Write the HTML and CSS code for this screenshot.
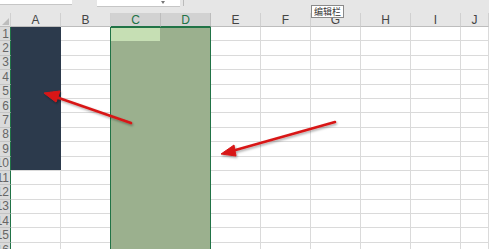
FILE: index.html
```html
<!DOCTYPE html>
<html lang="zh">
<head>
    <meta charset="UTF-8">
    <title>Sheet</title>
    <link rel="stylesheet" href="styles.css">
</head>
<body>
    <div class="topbar">
        <div class="name-box"></div>
        <div class="formula-box"><span class="drop"></span></div>
        <div class="sep"></div>
    </div>

    <div class="sheet" id="sheet">
        <div class="corner"><span class="corner-tri"></span></div>
    </div>

    <div class="tooltip">编辑栏</div>

    <svg class="arrows" width="489" height="249" viewBox="0 0 489 249">
        <defs>
            <filter id="shadow" x="-20%" y="-50%" width="140%" height="200%">
                <feDropShadow dx="1" dy="1.5" stdDeviation="1" flood-color="#000" flood-opacity="0.35"/>
            </filter>
        </defs>
        <g filter="url(#shadow)" fill="#d81818" stroke="#d81818">
            <line x1="131" y1="123" x2="56" y2="97" stroke-width="2.6" stroke-linecap="round"/>
            <polygon points="44,93 60,91 56,102" stroke-width="1"/>
            <line x1="335" y1="122" x2="232" y2="151" stroke-width="2.6" stroke-linecap="round"/>
            <polygon points="221,154 234,145 236,156" stroke-width="1"/>
        </g>
    </svg>

    <script>
        const cols = ['A', 'B', 'C', 'D', 'E', 'F', 'G', 'H', 'I', 'J'];
        const sheet = document.getElementById('sheet');

        // column headers
        cols.forEach(c => {
            const h = document.createElement('div');
            h.className = 'col-head' + (c === 'C' || c === 'D' ? ' picked' : '');
            h.textContent = c;
            sheet.appendChild(h);
        });

        // rows
        for (let r = 1; r <= 16; r++) {
            const rh = document.createElement('div');
            rh.className = 'row-head';
            rh.innerHTML = '<span>' + r + '</span>';
            sheet.appendChild(rh);
            cols.forEach(() => {
                const cell = document.createElement('div');
                cell.className = 'cell';
                sheet.appendChild(cell);
            });
        }

        // filled block A1:A10
        const dark = document.createElement('div');
        dark.className = 'dark-block';
        sheet.appendChild(dark);

        // selected columns C:D
        const sel = document.createElement('div');
        sel.className = 'selection';
        sel.innerHTML = '<div class="active-cell"></div>';
        sheet.appendChild(sel);
    </script>
</body>
</html>
```

FILE: styles.css
```css
body {
    margin: 0;
    width: 489px;
    height: 249px;
    overflow: hidden;
    background-color: #fff;
    font-family: "Liberation Sans", Arial, sans-serif;
    position: relative;
}
.topbar {
    height: 13px;
    background-color: #e6e6e6;
    display: flex;
    align-items: flex-start;
}
.name-box {
    width: 72px;
    height: 4px;
    background-color: #fff;
    border-bottom: 1px solid #c6c6c6;
}
.formula-box {
    width: 83px;
    height: 6px;
    margin-left: 25px;
    background-color: #fff;
    border-bottom: 1px solid #c6c6c6;
    position: relative;
}
.drop {
    position: absolute;
    right: 15px;
    top: 1px;
    border-left: 2px solid transparent;
    border-right: 2px solid transparent;
    border-top: 3px solid #777;
}
.sep {
    width: 1px;
    height: 6px;
    margin-left: 3px;
    background-color: #bbb;
}
.sheet {
    display: grid;
    grid-template-columns: 11px repeat(9, 50px) 28px;
    grid-template-rows: 14px repeat(16, 14.4px);
    position: relative;
}
.corner {
    background-color: #e6e6e6;
    border-right: 1px solid #d0d0d0;
    border-bottom: 1px solid #bdbdbd;
    position: relative;
    overflow: hidden;
}
.corner-tri {
    position: absolute;
    right: 1px;
    bottom: 1px;
    border-left: 7px solid transparent;
    border-bottom: 7px solid #bdbdbd;
}
.col-head {
    background-color: #e6e6e6;
    border-right: 1px solid #d0d0d0;
    border-bottom: 1px solid #bdbdbd;
    color: #444;
    font-size: 12px;
    text-align: center;
    line-height: 15px;
}
.col-head.picked {
    background-color: #d2d2d2;
    color: #217346;
    border-bottom: 1px solid #217346;
    border-right-color: #bdbdbd;
}
.row-head {
    background-color: #dadada;
    border-right: 1px solid #217346;
    border-bottom: 1px solid #c4c4c4;
    color: #666;
    font-size: 12px;
    overflow: hidden;
    display: flex;
    justify-content: flex-end;
    align-items: center;
}
.row-head span {
    margin-right: 1px;
    white-space: nowrap;
}
.cell {
    border-right: 1px solid #dadada;
    border-bottom: 1px solid #dadada;
}
.dark-block {
    grid-column: 2 / 3;
    grid-row: 2 / 12;
    position: absolute;
    top: 0;
    bottom: 1px;
    left: 0;
    right: 0;
    background-color: #2c3a4c;
}
.selection {
    grid-column: 4 / 6;
    grid-row: 2 / 18;
    position: absolute;
    top: 0;
    bottom: 0;
    left: -1px;
    right: 0;
    background-color: #9bb08e;
    border: 1px solid #217346;
}
.active-cell {
    width: 49px;
    height: 13px;
    background-color: #c6dfb4;
}
.tooltip {
    position: absolute;
    left: 311px;
    top: 5px;
    padding: 0 2px;
    height: 11px;
    line-height: 11px;
    font-size: 9px;
    font-family: "Noto Sans CJK SC", sans-serif;
    color: #333;
    background-color: #fff;
    border: 1px solid #8a8a8a;
}
.arrows {
    position: absolute;
    left: 0;
    top: 0;
}
```
